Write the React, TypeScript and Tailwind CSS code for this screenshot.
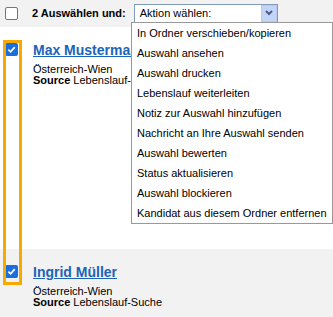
import React from "react";

const ACTIONS = [
  "In Ordner verschieben/kopieren",
  "Auswahl ansehen",
  "Auswahl drucken",
  "Lebenslauf weiterleiten",
  "Notiz zur Auswahl hinzufügen",
  "Nachricht an Ihre Auswahl senden",
  "Auswahl bewerten",
  "Status aktualisieren",
  "Auswahl blockieren",
  "Kandidat aus diesem Ordner entfernen",
];

const CANDIDATES = [
  { name: "Max Mustermann", location: "Österreich-Wien", source: "Lebenslauf-Suche" },
  { name: "Ingrid Müller", location: "Österreich-Wien", source: "Lebenslauf-Suche" },
];

function Box({ checked }: { checked?: boolean }) {
  if (checked) {
    return (
      <div className="w-[13px] h-[13px] rounded-[2px] bg-[#1a6fe0] flex items-center justify-center">
        <svg width="9" height="9" viewBox="0 0 10 10">
          <path d="M1.5 5.2 L4 7.6 L8.6 2.4" fill="none" stroke="#fff" strokeWidth="1.9" />
        </svg>
      </div>
    );
  }
  return <div className="w-[13px] h-[13px] rounded-[2px] border border-[#767676] bg-white" />;
}

function Candidate({ c, gray }: { c: (typeof CANDIDATES)[number]; gray?: boolean }) {
  return (
    <div className={`flex pt-[15px] pl-[5px] ${gray ? "bg-[#f2f2f2] h-[68px]" : "bg-white h-[222px]"}`}>
      <div className="mt-[1px]">
        <Box checked />
      </div>
      <div className="ml-[15px] flex flex-col">
        <a className="text-[14px] leading-[16px] font-bold text-[#1b64b8] underline whitespace-nowrap">
          {c.name}
        </a>
        <div className="mt-[5px] text-[11px] leading-[12px] text-black">{c.location}</div>
        <div className="text-[11px] leading-[11px] text-black whitespace-nowrap">
          <b>Source</b> {c.source}
        </div>
      </div>
    </div>
  );
}

export default function App() {
  return (
    <div className="relative w-[333px] h-[317px] overflow-hidden bg-white font-['Liberation_Sans',Arial,sans-serif]">
      {/* bulk action bar */}
      <div className="h-[27px] bg-[#f2f2f2] flex items-center pl-[5px]">
        <Box />
        <span className="ml-[14px] text-[11px] font-bold text-black">2 Auswählen und:</span>
        <div className="ml-[8px] mb-[1px] w-[144px] h-[19px] border border-[#7f9db9] bg-white flex items-center">
          <span className="flex-1 pl-[5px] text-[11px] text-black">Aktion wählen:</span>
          <div className="w-[16px] h-[17px] bg-[#c4d3f8] border border-[#b9c9ef] flex items-center justify-center">
            <svg width="8" height="6" viewBox="0 0 8 6">
              <path d="M1 1 L4 4 L7 1" fill="none" stroke="#4d5f8a" strokeWidth="2" />
            </svg>
          </div>
        </div>
      </div>

      <Candidate c={CANDIDATES[0]} />
      <Candidate c={CANDIDATES[1]} gray />

      {/* open select list */}
      <div className="absolute left-[131px] top-[22px] w-[202px] border border-[#999] bg-white">
        {ACTIONS.map((a) => (
          <div key={a} className="h-[20px] flex items-center pl-[5px] text-[11px] text-black whitespace-nowrap">
            {a}
          </div>
        ))}
      </div>

      {/* highlight around checkbox column */}
      <div className="absolute left-[3px] top-[40px] w-[19px] h-[245px] border-[3px] border-[#f9a800]" />
    </div>
  );
}
